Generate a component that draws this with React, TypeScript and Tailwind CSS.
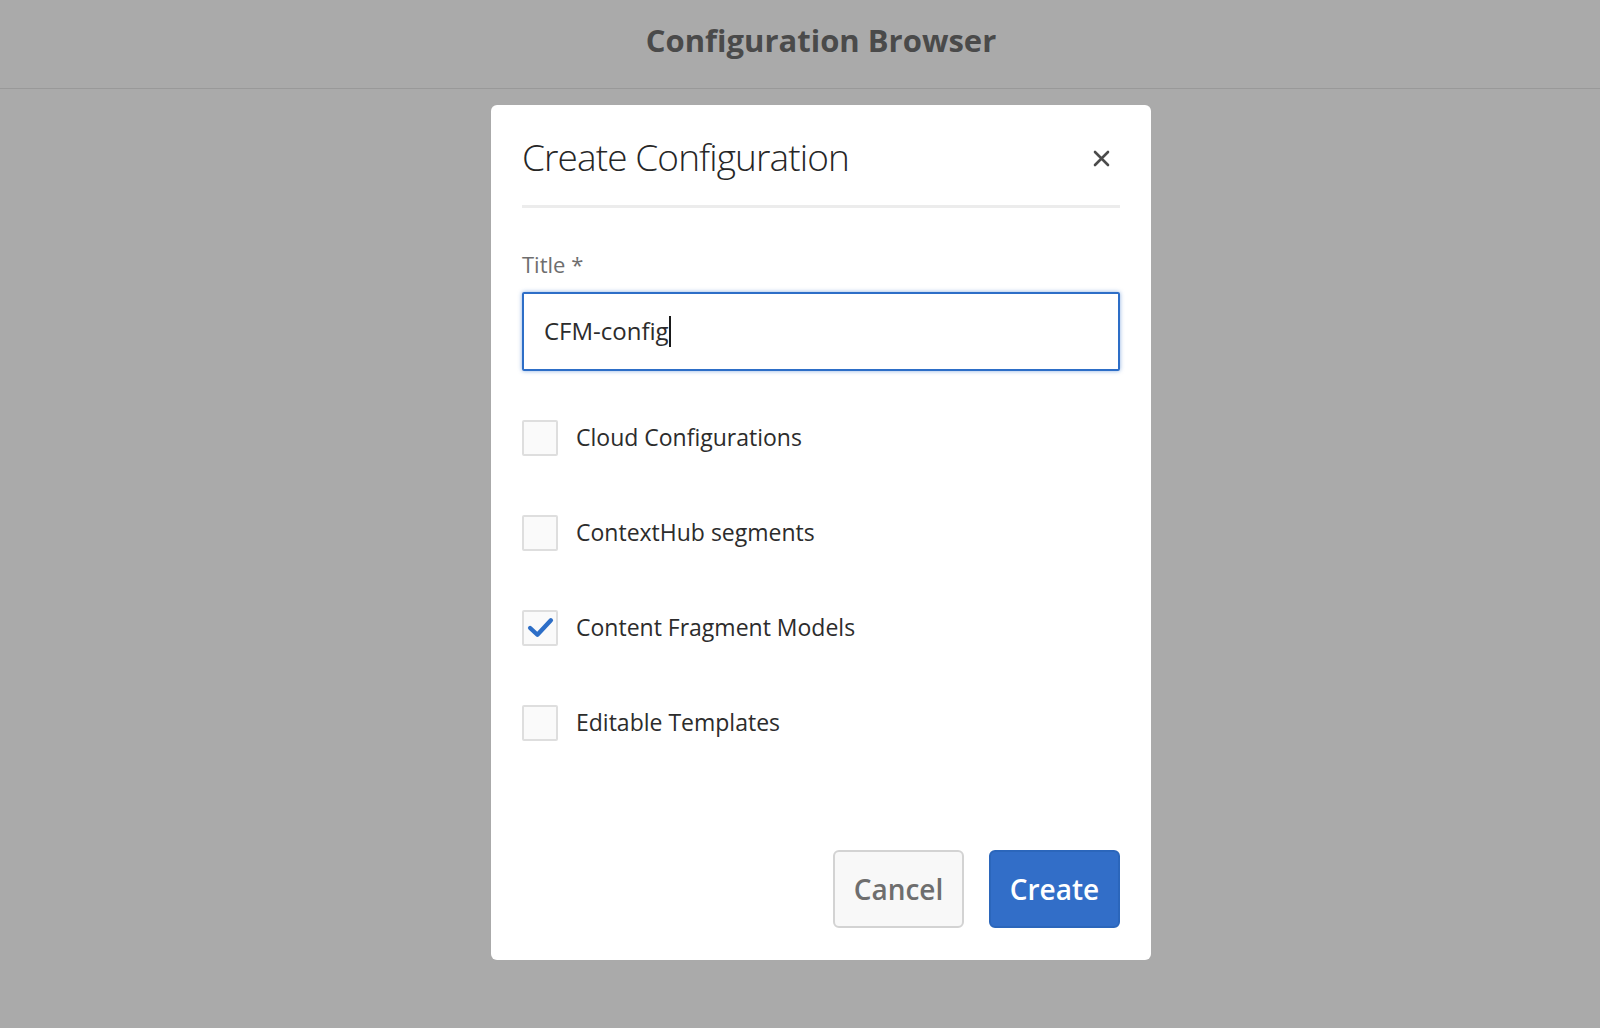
import { useState } from 'react';

const font = { fontFamily: '"Open Sans", "Noto Sans", sans-serif' };

const options = [
    { id: 'cloud', label: 'Cloud Configurations', checked: false },
    { id: 'contexthub', label: 'ContextHub segments', checked: false },
    { id: 'cfm', label: 'Content Fragment Models', checked: true },
    { id: 'templates', label: 'Editable Templates', checked: false },
];

function Checkbox({ checked }: { checked: boolean }) {
    return (
        <span className="flex h-[36px] w-[36px] shrink-0 items-center justify-center rounded-[2px] border-2 border-[#dedede] bg-[#fafafa]">
            {checked && (
                <svg width="27" height="23" viewBox="0 0 26 22" fill="none">
                    <path
                        d="M3 11.5 L10 18 L23 4"
                        stroke="#2d6ec7"
                        strokeWidth="4.2"
                        strokeLinecap="round"
                        strokeLinejoin="round"
                    />
                </svg>
            )}
        </span>
    );
}

export default function App() {
    const [checked, setChecked] = useState(options.map((o) => o.checked));

    return (
        <div className="flex h-[1028px] w-full flex-col bg-[#aaaaaa]" style={font}>
            {/* page header */}
            <header className="flex h-[89px] shrink-0 items-center justify-center border-b border-[#999999] pb-[7px] pl-[42px]">
                <h1 className="text-[31px] font-bold text-[#4a4a4a]">Configuration Browser</h1>
            </header>

            <div className="flex justify-center pl-[42px] pt-[16px]">
                <div className="flex h-[855px] w-[660px] flex-col rounded-[6px] bg-white px-[31px] pb-[32px] pt-[24px]">
                    <div className="flex items-center justify-between border-b-[3px] border-[#ececec] pb-[20px]">
                        <h2 className="text-[37px] font-light tracking-[-0.9px] text-[#262626]">Create Configuration</h2>
                        <button className="mr-[10px] mt-[4px] text-[#4b4b4b]">
                            <svg width="17" height="17" viewBox="0 0 17 17">
                                <path d="M2 2 L15 15 M15 2 L2 15" stroke="currentColor" strokeWidth="2.6" strokeLinecap="round" />
                            </svg>
                        </button>
                    </div>

                    <label className="mt-[40px] text-[22px] text-[#6e6e6e]">Title *</label>
                    <div className="mt-[11px] flex h-[79px] items-center rounded-[2px] border-2 border-[#2d6ec7] px-[20px] shadow-[0_0_4px_rgba(45,110,199,0.55)]">
                        <span className="text-[24px] text-[#2c2c2c]">CFM-config</span>
                        <span className="h-[31px] w-[2px] bg-[#1a1a1a]" />
                    </div>

                    <div className="mt-[49px] flex flex-col gap-[59px]">
                        {options.map((o, i) => (
                            <label
                                key={o.id}
                                className="flex cursor-pointer items-center gap-[18px]"
                                onClick={() => setChecked((c) => c.map((v, j) => (j === i ? !v : v)))}
                            >
                                <Checkbox checked={checked[i]} />
                                <span className="text-[23px] text-[#2c2c2c]">{o.label}</span>
                            </label>
                        ))}
                    </div>

                    <div className="mt-auto flex justify-end gap-[25px]">
                        <button className="h-[78px] w-[131px] rounded-[6px] border-2 border-[#d3d3d3] bg-[#f8f8f8] text-[28px] font-semibold text-[#6e6e6e]">
                            Cancel
                        </button>
                        <button className="h-[78px] w-[131px] rounded-[6px] border-2 border-[#2b66bb] bg-[#326ec8] text-[28px] font-semibold text-white">
                            Create
                        </button>
                    </div>
                </div>
            </div>
        </div>
    );
}
